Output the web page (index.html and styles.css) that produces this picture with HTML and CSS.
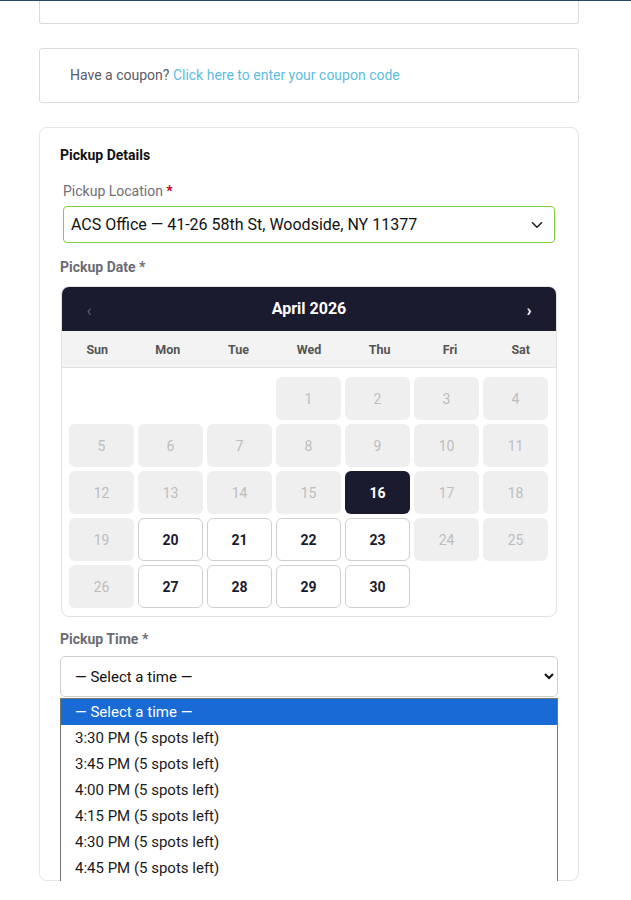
FILE: index.html
```html
<!DOCTYPE html>
<html lang="en">
<head>
<meta charset="utf-8">
<title>Checkout – Pickup Details</title>
<link rel="stylesheet" href="styles.css">
</head>
<body>
<div class="topbar"></div>
<div class="wrap">
  <div class="card card-cut"></div>

  <div class="card coupon">
    Have a coupon? <a href="#" class="link">Click here to enter your coupon code</a>
  </div>

  <div class="card pickup">
    <h3 class="title">Pickup Details</h3>

    <div class="loc-field">
      <label class="loc-label">Pickup Location <span class="req">*</span></label>
      <div class="loc-box">
        <select class="loc-select">
          <option>ACS Office — 41-26 58th St, Woodside, NY 11377</option>
        </select>
        <svg class="loc-chev" width="12" height="8" viewBox="0 0 12 8" aria-hidden="true"><path d="M1.5 1.8 6 6.2 10.5 1.8" fill="none" stroke="#222" stroke-width="1.6" stroke-linecap="round" stroke-linejoin="round"/></svg>
      </div>
    </div>

    <div class="field-label">Pickup Date *</div>
    <div class="cal">
      <div class="cal-head">
        <span class="nav prev">‹</span>
        <span class="month">April 2026</span>
        <span class="nav next">›</span>
      </div>
      <div class="cal-dows">
        <span>Sun</span><span>Mon</span><span>Tue</span><span>Wed</span><span>Thu</span><span>Fri</span><span>Sat</span>
      </div>
      <div class="cal-grid">
        <span class="day empty"></span><span class="day empty"></span><span class="day empty"></span>
        <span class="day off">1</span><span class="day off">2</span><span class="day off">3</span><span class="day off">4</span>
        <span class="day off">5</span><span class="day off">6</span><span class="day off">7</span><span class="day off">8</span><span class="day off">9</span><span class="day off">10</span><span class="day off">11</span>
        <span class="day off">12</span><span class="day off">13</span><span class="day off">14</span><span class="day off">15</span><span class="day sel">16</span><span class="day off">17</span><span class="day off">18</span>
        <span class="day off">19</span><span class="day on">20</span><span class="day on">21</span><span class="day on">22</span><span class="day on">23</span><span class="day off">24</span><span class="day off">25</span>
        <span class="day off">26</span><span class="day on">27</span><span class="day on">28</span><span class="day on">29</span><span class="day on">30</span>
      </div>
    </div>

    <div class="field-label time-label">Pickup Time *</div>
    <div class="time-field">
      <select class="time-select">
        <option>— Select a time —</option>
      </select>
      <div class="time-pop">
        <div class="opt active">— Select a time —</div>
        <div class="opt">3:30 PM (5 spots left)</div>
        <div class="opt">3:45 PM (5 spots left)</div>
        <div class="opt">4:00 PM (5 spots left)</div>
        <div class="opt">4:15 PM (5 spots left)</div>
        <div class="opt">4:30 PM (5 spots left)</div>
        <div class="opt">4:45 PM (5 spots left)</div>
      </div>
    </div>
  </div>
</div>
</body>
</html>
```

FILE: styles.css
```css
* { box-sizing: border-box; }
html, body { margin: 0; padding: 0; background: #fff; }
body { font-family: Roboto, "Liberation Sans", sans-serif; color: #222; }

.topbar { height: 1px; background: #1f4a6d; }

.wrap { width: 540px; margin-left: 39px; }

.card { border: 1px solid #d9d9df; border-radius: 3px; background: #fff; }

.card-cut { height: 23px; border-top: none; border-radius: 0 0 3px 3px; }

.coupon {
  margin-top: 24px;
  height: 55px;
  padding: 16px 30px 16px 30px;
  font-size: 14px;
  line-height: 21px;
  color: #5a5a66;
}
.link { color: #5dbde0; text-decoration: none; }

.pickup {
  margin-top: 24px;
  border-color: #e4e4e4;
  border-radius: 8px;
  padding: 18px 20px 0 20px;
  height: 754px;
}

.title { margin: 0; font-size: 14px; line-height: 18px; font-weight: 700; color: #111; }

.loc-field { padding: 0 3px; margin-top: 17px; }
.loc-label { display: block; font-size: 14px; line-height: 20px; color: #6e6e78; }
.req { color: #c0001a; font-weight: 700; }
.loc-box { position: relative; margin-top: 5px; width: 492px; }
.loc-select {
  display: block;
  width: 492px;
  height: 37px;
  padding: 0 30px 0 7px;
  border: 1.5px solid #7dd13a;
  border-radius: 4px;
  font-family: Roboto, "Liberation Sans", sans-serif;
  font-size: 16px;
  color: #111;
  background: #fff;
  -webkit-appearance: none;
  appearance: none;
}
.loc-chev { position: absolute; right: 12px; top: 15px; pointer-events: none; }

.field-label { margin-top: 14px; font-size: 14px; line-height: 20px; font-weight: 700; color: #6b6b73; }

.cal {
  margin: 9px 1px 0 1px;
  width: 496px;
  border: 1px solid #e2e2e2;
  border-radius: 8px;
  overflow: hidden;
}
.cal-head {
  height: 44px;
  background: #1b1b2f;
  display: flex;
  align-items: center;
  justify-content: space-between;
  padding: 0 22px 0 22px;
}
.month { color: #fff; font-weight: 700; font-size: 16px; margin-top: -2px; }
.nav { font-size: 17px; font-weight: 700; line-height: 1; width: 10px; text-align: center; padding-top: 3px; }
.prev { color: #5f5f70; font-weight: 400; }
.next { color: #fff; }

.cal-dows {
  display: grid;
  grid-template-columns: repeat(7, 1fr);
  height: 37px;
  align-items: center;
  background: #f3f3f3;
  border-bottom: 1px solid #e2e2e2;
  font-size: 12.5px;
  font-weight: 700;
  color: #555;
  text-align: center;
}

.cal-grid {
  display: grid;
  grid-template-columns: repeat(7, 1fr);
  grid-auto-rows: 43px;
  gap: 4px;
  padding: 9px 8px 8px 7px;
}
.day {
  display: flex;
  align-items: center;
  justify-content: center;
  border-radius: 6px;
  font-size: 14px;
}
.off { background: #efefef; color: #bdbdbd; }
.on { background: #fff; border: 1px solid #cfcfcf; color: #1b1b2f; font-weight: 700; }
.sel { background: #1b1b2f; color: #fff; font-weight: 700; }

.time-label { margin-top: 12px; }
.time-field { position: relative; margin-top: 7px; }
.time-select {
  display: block;
  width: 498px;
  height: 41px;
  padding: 0 4px 0 10px;
  border: 1px solid #cfcfcf;
  border-radius: 5px;
  font-family: Roboto, "Liberation Sans", sans-serif;
  font-size: 15px;
  color: #111;
  background: #fff;
}
.time-pop {
  position: absolute;
  left: 0;
  top: 42px;
  width: 498px;
  background: #fff;
  border: 1px solid #767676;
  font-size: 15px;
  color: #1a1a1a;
  z-index: 5;
}
.opt { height: 26px; line-height: 26px; padding-left: 14px; }
.opt.active { background: #1a6ad5; color: #fff; }
```
